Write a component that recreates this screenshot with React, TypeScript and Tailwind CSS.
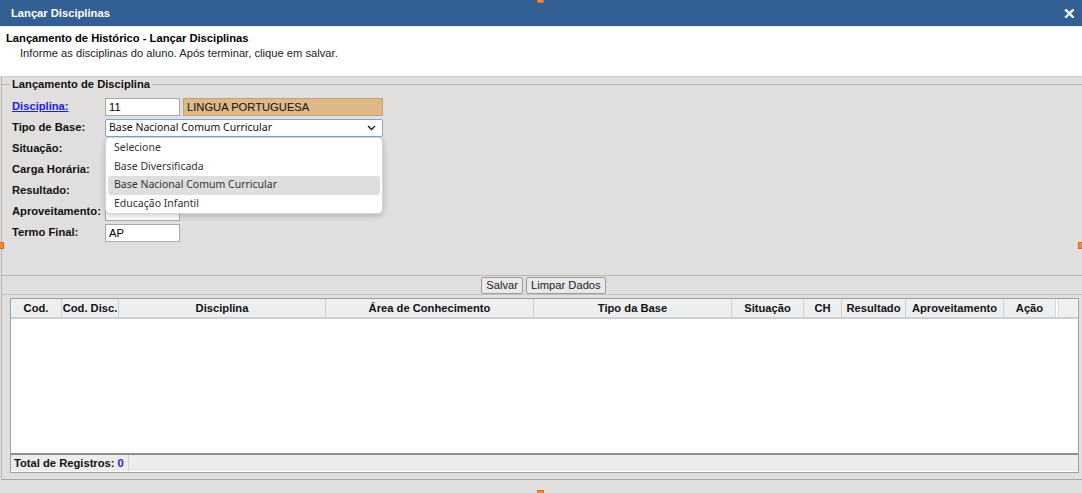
import React from 'react';

const headers: { label: string; w: string }[] = [
  { label: 'Cod.', w: 'w-[51px]' },
  { label: 'Cod. Disc.', w: 'w-[57px]' },
  { label: 'Disciplina', w: 'w-[207px]' },
  { label: 'Área de Conhecimento', w: 'w-[208px]' },
  { label: 'Tipo da Base', w: 'w-[198px]' },
  { label: 'Situação', w: 'w-[72px]' },
  { label: 'CH', w: 'w-[38px]' },
  { label: 'Resultado', w: 'w-[64px]' },
  { label: 'Aproveitamento', w: 'w-[98px]' },
  { label: 'Ação', w: 'w-[52px]' },
];

const options = ['Selecione', 'Base Diversificada', 'Base Nacional Comum Curricular', 'Educação Infantil'];

function Handle({ className }: { className: string }) {
  return <div className={`absolute w-[7px] h-[5px] bg-[#f08a3c] border border-[#d86a20] ${className}`} />;
}

function Label({ children, link }: { children: React.ReactNode; link?: boolean }) {
  return (
    <div className={`w-[93px] shrink-0 font-bold ${link ? 'text-[#1a1aee] underline' : 'text-[#111]'}`}>
      {children}
    </div>
  );
}

const inputCls = 'h-[18px] w-[75px] bg-white border border-[#a9a9a9] px-[3px] leading-[16px] text-black';

export default function App() {
  return (
    <div className="relative w-[1082px] h-[493px] overflow-hidden bg-[#e0dfdd] font-['Liberation_Sans',Arial,sans-serif] text-[11.2px] text-black">
      {/* title bar */}
      <div className="h-[26px] bg-[#336094] flex items-center justify-between pl-[11px] pr-[6px]">
        <span className="text-white font-bold">Lançar Disciplinas</span>
        <span className="text-white font-bold text-[15px] leading-none">✕</span>
      </div>

      {/* header info */}
      <div className="h-[50px] bg-white border-t border-[#e8e8e8] pt-[4px] pl-[6px]">
        <div className="font-bold leading-[15px]">Lançamento de Histórico - Lançar Disciplinas</div>
        <div className="pl-[14px] leading-[15px] text-[#222]">Informe as disciplinas do aluno. Após terminar, clique em salvar.</div>
      </div>

      {/* body */}
      <div className="h-[404px] border-t border-[#d0d0d0] border-l border-l-[#b8b5b1] ml-[1px] flex flex-col">
        <div className="h-[7px]" />
        <div className="relative border-t border-[#b8b5b1] border-b h-[192px]">
          <div className="absolute -top-[8px] left-[8px] px-[2px] bg-[#e0dfdd] font-bold leading-[15px] text-[#111]">
            Lançamento de Disciplina
          </div>
          <div className="pt-[11px] pl-[10px] flex flex-col">
            <div className="h-[21px] flex items-center">
              <Label link>Disciplina:</Label>
              <div className={inputCls}>11</div>
              <div className="ml-[3px] h-[18px] w-[200px] bg-[#deb887] border border-[#bda27c] px-[3px] leading-[16px] text-[#111]">
                LINGUA PORTUGUESA
              </div>
            </div>
            <div className="h-[21px] flex items-center">
              <Label>Tipo de Base:</Label>
              <div className="h-[18px] w-[278px] bg-white border border-[#7aa6d8] rounded-[2px] pl-[3px] pr-[6px] flex items-center justify-between font-['Noto_Sans','Open_Sans',sans-serif] text-[10.5px] text-[#111]">
                <span>Base Nacional Comum Curricular</span>
                <svg width="9" height="6" viewBox="0 0 9 6" fill="none" stroke="#222" strokeWidth="1.4">
                  <path d="M1 1l3.5 3.5L8 1" />
                </svg>
              </div>
            </div>
            <div className="h-[21px] flex items-center">
              <Label>Situação:</Label>
              <div className="h-[18px] w-[278px] bg-white border border-[#a9a9a9]" />
            </div>
            <div className="h-[21px] flex items-center">
              <Label>Carga Horária:</Label>
              <div className={inputCls} />
            </div>
            <div className="h-[21px] flex items-center">
              <Label>Resultado:</Label>
              <div className="h-[18px] w-[278px] bg-white border border-[#a9a9a9]" />
            </div>
            <div className="h-[21px] flex items-center">
              <Label>Aproveitamento:</Label>
              <div className={inputCls} />
            </div>
            <div className="h-[21px] flex items-center">
              <Label>Termo Final:</Label>
              <div className={inputCls}>AP</div>
            </div>
          </div>
        </div>

        {/* buttons */}
        <div className="h-[19px] flex items-center justify-center gap-[3px] border-b border-[#c8c6c3] pl-[3px]">
          <button className="h-[17px] px-[4px] bg-[#e9e9e9] border border-[#9a9a9a] rounded-[2px] leading-[15px] text-[#222]">
            Salvar
          </button>
          <button className="h-[17px] px-[4px] bg-[#e9e9e9] border border-[#9a9a9a] rounded-[2px] leading-[15px] text-[#222]">
            Limpar Dados
          </button>
        </div>

        {/* table */}
        <div className="mt-[3px] ml-[8px] w-[1069px] h-[175px] border border-[#a0a0a0] bg-white flex flex-col">
          <div className="h-[20px] flex border-b-2 border-[#cfcfcf] bg-white">
            {headers.map((h, i) => (
              <div
                key={h.label}
                className={`${h.w} shrink-0 h-full bg-[#edeef0] flex items-center justify-center whitespace-nowrap font-bold text-[#111] ${i < headers.length - 1 ? 'border-r border-[#cfcfcf]' : 'border-r border-[#d8d8d8]'}`}
              >
                {h.label}
              </div>
            ))}
            <div className="ml-[2px] w-[19px] h-full bg-[#efefef] border-l border-[#d8d8d8]" />
          </div>
          <div className="flex-1 bg-white" />
          <div className="h-[19px] border-t-2 border-t-[#8e8e8e] bg-[#ececec] flex items-center border-b border-b-white">
            <div className="pl-[3px] pr-[4px] h-full flex items-center font-bold text-[#111] border-r border-[#d0d0d0]">
              Total de Registros:&nbsp;<span className="text-[#1a1aee]">0</span>
            </div>
          </div>
        </div>
        <div className="flex-1 border-b border-[#a8a6a3]" />
      </div>

      {/* dropdown list */}
      <div className="absolute left-[105px] top-[137px] w-[278px] h-[77px] bg-white border border-[#d4d4d4] rounded-[5px] shadow-[0_2px_6px_rgba(0,0,0,0.2)] pt-[1px] px-[2px] font-['Noto_Sans','Open_Sans',sans-serif] text-[10.5px] text-[#333]">
        {options.map((o) => (
          <div
            key={o}
            className={`h-[18.5px] flex items-center pl-[6px] rounded-[3px] ${o === 'Base Nacional Comum Curricular' ? 'bg-[#dedede]' : ''}`}
          >
            {o}
          </div>
        ))}
      </div>

      <Handle className="left-[537px] -top-[2px]" />
      <Handle className="-left-[3px] top-[242px] w-[5px] h-[7px]" />
      <Handle className="-right-[3px] top-[242px] w-[5px] h-[7px]" />
      <Handle className="left-[537px] bottom-[-2px]" />
    </div>
  );
}
